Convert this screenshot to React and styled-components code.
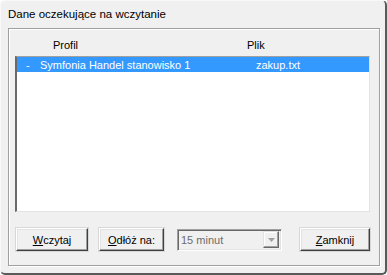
import React from 'react';
import styled, { createGlobalStyle } from 'styled-components';

const GlobalStyle = createGlobalStyle`
  html, body {
    margin: 0;
    padding: 0;
    background: #ffffff;
  }
  * {
    box-sizing: border-box;
  }
`;

const rows = [{ profile: 'Symfonia Handel stanowisko 1', file: 'zakup.txt', selected: true }];

function App() {
  return (
    <>
      <GlobalStyle />
      <Window>
        <Title>Dane oczekujące na wczytanie</Title>
        <Frame>
          <Header>
            <HeadProfile>Profil</HeadProfile>
            <HeadFile>Plik</HeadFile>
          </Header>
          <List>
            {rows.map((row, idx) => (
              <Row key={idx} selected={row.selected}>
                <Dash>-</Dash>
                <ProfileCell>{row.profile}</ProfileCell>
                <FileCell>{row.file}</FileCell>
              </Row>
            ))}
          </List>
          <Buttons>
            <Button width={72}>
              <u>W</u>czytaj
            </Button>
            <Button width={65}>
              <u>O</u>dłóż na:
            </Button>
            <Combo>
              <ComboText>15 minut</ComboText>
              <ComboArrow>
                <svg width="7" height="4" viewBox="0 0 7 4">
                  <path d="M0 0h7L3.5 4z" fill="#a0a0a0" />
                </svg>
              </ComboArrow>
            </Combo>
            <Spacer />
            <Button width={70}>
              <u>Z</u>amknij
            </Button>
          </Buttons>
        </Frame>
      </Window>
    </>
  );
}

const Window = styled.div`
  width: 387px;
  height: 275px;
  display: flex;
  flex-direction: column;
  background: #f0f0f0;
  border-top: 1px solid #f8f8f8;
  border-left: 1px solid #f8f8f8;
  border-right: 2px solid #5a5a5a;
  border-bottom: 2px solid #5a5a5a;
  border-radius: 5px;
  font-family: 'Liberation Sans', Arial, sans-serif;
  font-size: 11px;
  color: #000000;
  padding: 0 5px 7px 7px;
`;

const Title = styled.div`
  height: 28px;
  padding: 7px 0 0 0;
  line-height: 13px;
  font-size: 11.5px;
`;

const Frame = styled.div`
  flex: 1;
  display: flex;
  flex-direction: column;
  border: 1px solid #a0a0a0;
  box-shadow: inset 1px 1px 0 #ffffff, 1px 1px 0 #ffffff;
  padding: 0 9px 14px 6px;
`;

const Header = styled.div`
  height: 27px;
  display: flex;
  align-items: flex-end;
  padding-bottom: 4px;
  line-height: 13px;
`;

const HeadProfile = styled.span`
  margin-left: 38px;
  width: 194px;
`;

const HeadFile = styled.span``;

const List = styled.div`
  height: 156px;
  background: #ffffff;
  border-top: 1px solid #a0a0a0;
  border-left: 2px solid #696969;
  border-right: 1px solid #e3e3e3;
  border-bottom: 1px solid #e3e3e3;
`;

const Row = styled.div`
  height: 15px;
  display: flex;
  align-items: center;
  background: ${props => (props.selected ? '#3399ff' : 'transparent')};
  color: ${props => (props.selected ? '#ffffff' : '#000000')};
`;

const Dash = styled.span`
  width: 23px;
  padding-left: 9px;
`;

const ProfileCell = styled.span`
  width: 216px;
`;

const FileCell = styled.span``;

const Buttons = styled.div`
  margin-top: 16px;
  display: flex;
  align-items: center;
  padding-left: 1px;
`;

const Button = styled.div`
  width: ${props => props.width}px;
  height: 23px;
  display: flex;
  align-items: center;
  justify-content: center;
  margin-right: 11px;
  background: #f0f0f0;
  border-top: 1px solid #ffffff;
  border-left: 1px solid #ffffff;
  border-right: 1px solid #404040;
  border-bottom: 1px solid #404040;
  box-shadow: inset -1px -1px 0 #a0a0a0, inset 1px 1px 0 #e3e3e3;
  outline: 1px solid #d8d8d8;
  &:last-child {
    margin-right: 0;
  }
`;

const Combo = styled.div`
  width: 105px;
  height: 22px;
  margin-left: 2px;
  display: flex;
  align-items: center;
  background: #f0f0f0;
  border-top: 1px solid #a0a0a0;
  border-left: 1px solid #a0a0a0;
  border-right: 1px solid #ffffff;
  border-bottom: 1px solid #ffffff;
  box-shadow: inset 1px 1px 0 #696969, inset -1px -1px 0 #e3e3e3;
  padding: 2px;
`;

const ComboText = styled.span`
  flex: 1;
  color: #6d6d6d;
  padding-left: 1px;
`;

const ComboArrow = styled.div`
  width: 16px;
  height: 17px;
  display: flex;
  align-items: center;
  justify-content: center;
  background: #f0f0f0;
  border-top: 1px solid #e3e3e3;
  border-left: 1px solid #e3e3e3;
  border-right: 1px solid #696969;
  border-bottom: 1px solid #696969;
  box-shadow: inset -1px -1px 0 #a0a0a0, inset 1px 1px 0 #ffffff;
`;

const Spacer = styled.div`
  flex: 1;
`;

export default App;
